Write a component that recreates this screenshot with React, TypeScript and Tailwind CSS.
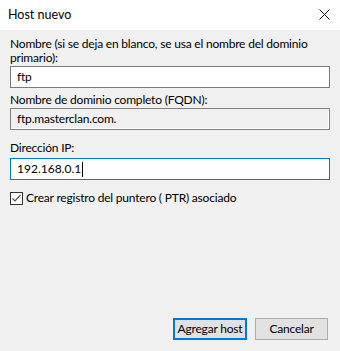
import React from 'react';

const font = { fontFamily: 'Lato, "Segoe UI", sans-serif' };

export default function App() {
  return (
    <div
      className="w-[340px] h-[351px] bg-[#f0f0f0] flex flex-col text-[12px] tracking-[-0.2px] text-black"
      style={font}
    >
      <div className="h-[30px] bg-white flex items-center justify-between pl-[8px] pr-[10px]">
        <span className="text-[12.5px] tracking-normal leading-none">Host nuevo</span>
        <svg width="11" height="11" viewBox="0 0 11 11" className="mt-[-1px]">
          <path d="M0.5 0.5 L10.5 10.5 M10.5 0.5 L0.5 10.5" stroke="#111" strokeWidth="1" />
        </svg>
      </div>

      <div className="flex flex-col px-[10px] pt-[7px] flex-1">
        <label className="leading-[14px] mb-[1px]">
          Nombre (si se deja en blanco, se usa el nombre del dominio
          <br />
          primario):
        </label>
        <div className="h-[22px] border border-[#7a7a7a] bg-white flex items-center px-[6px]">ftp</div>

        <label className="leading-[14px] mt-[5px] mb-[1px]">Nombre de dominio completo (FQDN):</label>
        <div className="h-[22px] border border-[#828282] bg-[#f0f0f0] flex items-center px-[6px] shadow-[inset_-1px_-1px_0_#fff]">
          ftp.masterclan.com.
        </div>

        <label className="leading-[14px] mt-[11px] mb-[3px]">Dirección IP:</label>
        <div className="h-[22px] border border-[#0078d7] bg-white flex items-center px-[6px] tracking-normal">
          192.168.0.1<span className="w-px h-[15px] bg-black ml-[1px]" />
        </div>

        <div className="flex items-center gap-[3px] mt-[11px]">
          <div className="w-[13px] h-[13px] border border-[#333] bg-white flex items-center justify-center">
            <svg width="11" height="11" viewBox="0 0 11 11">
              <path d="M1.5 5.5 L4 8 L9.5 2" stroke="#555" strokeWidth="1.2" fill="none" />
            </svg>
          </div>
          <span className="leading-[14px]">Crear registro del puntero ( PTR) asociado</span>
        </div>

        <div className="flex-1" />

        <div className="flex justify-end gap-[8px] pr-[2px] mb-[11px]">
          <button className="w-[74px] h-[22px] border-2 border-[#0078d7] bg-[#e1e1e1] flex items-center justify-center leading-none whitespace-nowrap">
            Agregar host
          </button>
          <button className="w-[73px] h-[22px] border border-[#adadad] bg-[#e1e1e1] flex items-center justify-center leading-none whitespace-nowrap">
            Cancelar
          </button>
        </div>
      </div>
    </div>
  );
}
